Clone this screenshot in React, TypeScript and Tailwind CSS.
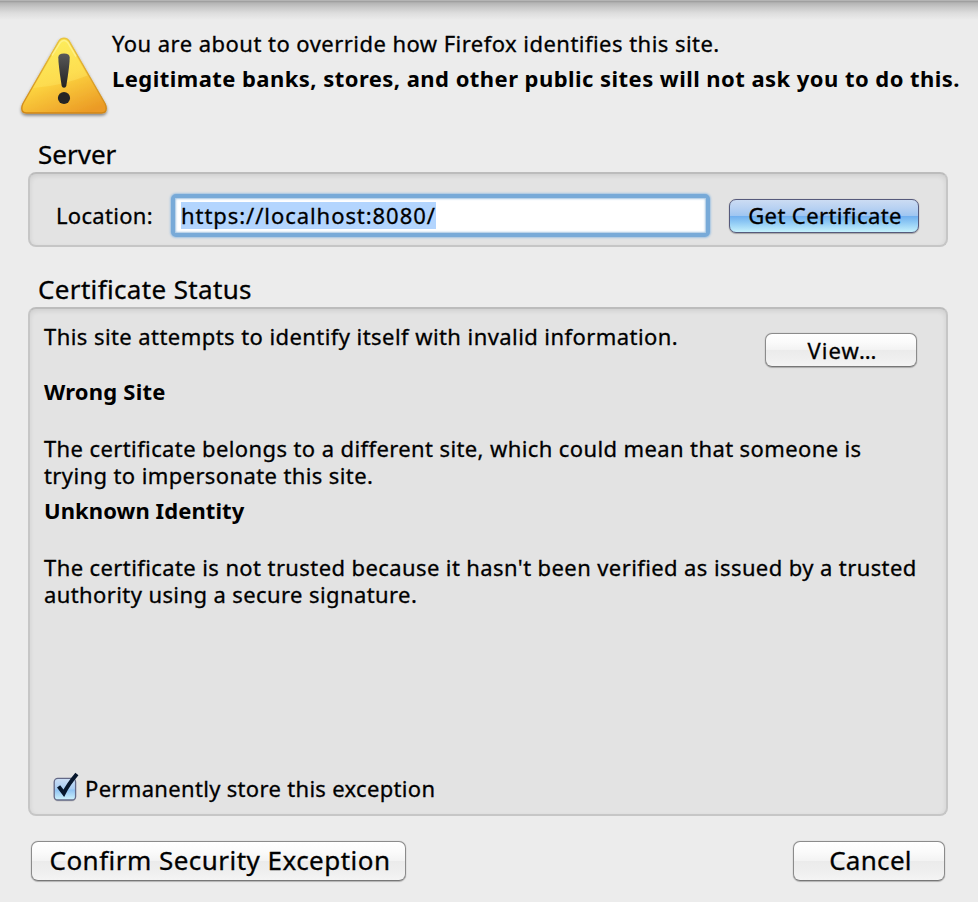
import { useState, type ReactNode } from "react";

const plainFace =
  "bg-[linear-gradient(#ffffff_0%,#fafafa_28%,#f3f3f3_49%,#ebebeb_51%,#efefef_78%,#f4f4f4_100%)] border-[#8b8b8b] border-b-[#777777] shadow-[0_1px_1px_rgba(0,0,0,0.22),0_0_1px_rgba(0,0,0,0.3)]";
const blueFace =
  "bg-[linear-gradient(#ccdcf3_0%,#b5d0f2_28%,#9fc6f1_49%,#71b0ef_51%,#92ccf5_72%,#c5f1fc_100%)] border-[#565a7c] shadow-[0_1px_1px_rgba(0,0,0,0.25),0_0_1px_rgba(0,0,0,0.3)]";

function Button({ face, className, children }: { face: string; className: string; children: ReactNode }) {
  return (
    <button
      type="button"
      className={`flex shrink-0 items-center justify-center rounded-[7px] border whitespace-nowrap ${face} ${className}`}
    >
      {children}
    </button>
  );
}

function WarningIcon() {
  return (
    <svg viewBox="0 0 96 90" className="h-[90px] w-[96px] shrink-0">
      <defs>
        <linearGradient id="fill" x1="0.3" y1="0" x2="0.75" y2="1">
          <stop offset="0" stopColor="#fbe94e" />
          <stop offset="0.5" stopColor="#fcd33f" />
          <stop offset="1" stopColor="#eb9a25" />
        </linearGradient>
        <linearGradient id="edge" x1="0" y1="0" x2="0" y2="1">
          <stop offset="0" stopColor="#e9c440" />
          <stop offset="1" stopColor="#cf8618" />
        </linearGradient>
        <linearGradient id="gloss" x1="0" y1="0" x2="0" y2="1">
          <stop offset="0" stopColor="#fff36a" stopOpacity="0.5" />
          <stop offset="1" stopColor="#ffee72" stopOpacity="0.3" />
        </linearGradient>
        <linearGradient id="mark" x1="0" y1="0" x2="0" y2="1">
          <stop offset="0" stopColor="#595959" />
          <stop offset="1" stopColor="#222222" />
        </linearGradient>
        <filter id="soft" x="-10%" y="-10%" width="120%" height="125%">
          <feDropShadow dx="0" dy="1.8" stdDeviation="1.5" floodColor="#000" floodOpacity="0.45" />
        </filter>
      </defs>
      <path
        d="M43 10.8 Q44.7 8.2 48 8.2 Q51.3 8.2 53 10.8 L89 73.5 Q90.2 75.8 90.2 78.5 Q90.2 83 85.5 83 H10.5 Q5.8 83 5.8 78.5 Q5.8 75.8 7 73.5 Z"
        fill="url(#fill)" stroke="url(#edge)" strokeWidth="1.4" strokeLinejoin="round" filter="url(#soft)"
      />
      <path d="M44 12 Q48 8 52 12 L71.5 45.5 Q45 56 17 58 Z" fill="url(#gloss)" />
      <path d="M36 25.5 L44.2 12.5 Q48 8.5 51.8 12.5 L60 26.5" fill="none" stroke="#fff6a0" strokeWidth="1.5" opacity="0.65" />
      <path d="M42.3 27.5 Q42.3 23.5 48 23.5 Q53.7 23.5 53.7 27.5 Q53.7 35 50.3 56 Q49.8 57.7 48 57.7 Q46.2 57.7 45.7 56 Q42.3 35 42.3 27.5 Z" fill="url(#mark)" />
      <circle cx="48" cy="68" r="6.1" fill="#252525" />
    </svg>
  );
}

function Checkbox() {
  const [checked, setChecked] = useState(true);
  return (
    <button type="button" role="checkbox" aria-checked={checked} onClick={() => setChecked(!checked)} className="h-[32px] w-[28px] shrink-0">
      <svg viewBox="0 0 28 32" className="h-[32px] w-[28px]">
        <defs>
          <linearGradient id="box" x1="0" y1="0" x2="0" y2="1">
            <stop offset="0" stopColor="#cddff5" />
            <stop offset="0.48" stopColor="#a9cdf2" />
            <stop offset="0.54" stopColor="#90c3f2" />
            <stop offset="1" stopColor="#cff3fc" />
          </linearGradient>
        </defs>
        <rect x="2" y="7.6" width="21.8" height="22" rx="4" fill="#000" opacity="0.13" />
        <rect x="2.2" y="6.4" width="21.4" height="21.6" rx="3.6" fill="url(#box)" stroke="#646987" strokeWidth="1.3" />
        {checked && <path d="M6.6 14.4 L11.8 21.3 Q16.5 12 24.9 2" fill="none" stroke="#07172d" strokeWidth="4" />}
      </svg>
    </button>
  );
}

const panel =
  "rounded-[8px] border-2 border-[#c6c6c6] border-t-[#bcbcbc] bg-[#e3e3e3] shadow-[inset_0_2px_5px_rgba(0,0,0,0.09)]";

export default function App() {
  return (
    <div className="relative h-[902px] w-[978px] overflow-hidden bg-[#ececec] font-['Noto_Sans',sans-serif] text-[22px] leading-[27px] text-black [-webkit-text-stroke:0.3px_black]">
      <div className="h-[20px] border-t border-[#b4b4b4] bg-[linear-gradient(#999999_0px,#b5b5b5_2px,#c7c7c7_6px,#dddddd_12px,#ececec_19px)]" />
      <header className="flex h-[118px] pt-[10px] pl-[16px]">
        <WarningIcon />
        <div className="whitespace-nowrap">
          <p className="tracking-[0.46px]">You are about to override how Firefox identifies this site.</p>
          <p className="mt-[8px] font-bold tracking-[0.45px] [-webkit-text-stroke:0px]">Legitimate banks, stores, and other public sites will not ask you to do this.</p>
        </div>
      </header>

      <section className="ml-[28px] w-[920px]">
        <h2 className="h-[34px] pl-[10px] text-[26px] leading-[32px]">Server</h2>
        <div className={`flex h-[75px] pl-[26px] ${panel}`}>
          <label htmlFor="location" className="mt-[28px] w-[112px] whitespace-nowrap tracking-[0.3px]">Location:</label>
          <div
            id="location"
            className="mt-[20px] ml-[3px] flex h-[43px] w-[539px] shrink-0 rounded-[5px] border-[4px] border-[#78aad8] bg-white pt-[3px] pl-[6px] shadow-[inset_0_0_2px_1px_#a3c4e2,0_0_2px_1px_#a3c4e2]"
          >
            <span className="mt-[1px] h-[27px] bg-[#b3d5fe] tracking-[0.94px]">https://localhost:8080/</span>
          </div>
          <Button face={blueFace} className="mt-[25px] ml-[19px] h-[34px] w-[190px] pb-[1px] pl-[2px] tracking-[0.4px]">Get Certificate</Button>
        </div>
      </section>

      <section className="mt-[26px] ml-[28px] w-[920px]">
        <h2 className="h-[34px] pl-[10px] text-[26px] leading-[32px] tracking-[0.35px]">Certificate Status</h2>
        <div className={`flex h-[509px] flex-col pl-[14px] ${panel}`}>
          <div className="flex justify-between pr-[29px] whitespace-nowrap">
            <div>
              <p className="mt-[14px] tracking-[0.43px]">This site attempts to identify itself with invalid information.</p>
              <h3 className="mt-[28px] font-bold tracking-[0.2px] [-webkit-text-stroke:0px]">Wrong Site</h3>
            </div>
            <Button face={plainFace} className="mt-[24px] h-[34px] w-[152px] pl-[3px] tracking-[1.1px]">View…</Button>
          </div>
          <p className="mt-[30px] w-[840px] tracking-[0.39px]">
            The certificate belongs to a different site, which could mean that someone is trying to impersonate this site.
          </p>
          <h3 className="mt-[8px] font-bold tracking-[0.07px] [-webkit-text-stroke:0px]">Unknown Identity</h3>
          <p className="mt-[30px] w-[890px] tracking-[0.4px]">
            The certificate is not trusted because it hasn't been verified as issued by a trusted authority using a secure signature.
          </p>
          <div className="mt-auto mb-[10px] flex items-center pl-[8px]">
            <Checkbox />
            <span className="ml-[5px] whitespace-nowrap tracking-[0.32px]">Permanently store this exception</span>
          </div>
        </div>
      </section>

      <footer className="mt-[25px] flex justify-between pr-[33px] pl-[31px] text-[26px] leading-[32px]">
        <Button face={plainFace} className="h-[40px] w-[375px] pb-[3px] pl-[3px] tracking-[0.47px]">Confirm Security Exception</Button>
        <Button face={plainFace} className="h-[40px] w-[152px] pb-[3px] pl-[3px] tracking-[0.3px]">Cancel</Button>
      </footer>
    </div>
  );
}
